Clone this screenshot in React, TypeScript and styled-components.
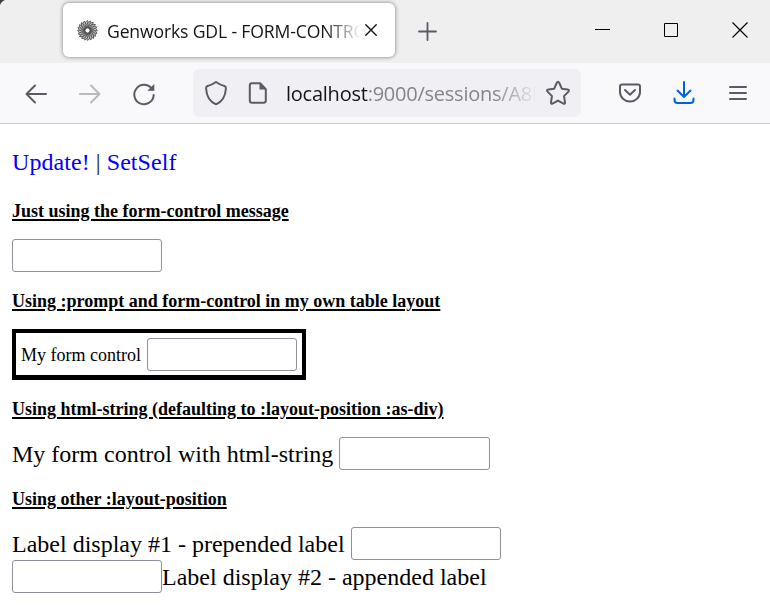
import React from "react";
import styled, { createGlobalStyle } from "styled-components";

const GlobalStyle = createGlobalStyle`
  * { box-sizing: border-box; }
  body { margin: 0; background: #fff; overflow: hidden; }
  svg { display: block; flex: none; }
`;

const Window = styled.div`
  width: 770px;
  height: 611px;
  overflow: hidden;
  background: #fff;
`;

const TabStrip = styled.header`
  display: flex;
  height: 63px;
  padding: 3px 0 0 63px;
  background: radial-gradient(circle at 8px 8px, #efefef 8px, #3b4244 9px) 0 0 / 8px 8px no-repeat, #efefef;
`;

const Tab = styled.div`
  display: flex;
  align-items: center;
  width: 332px;
  height: 54px;
  padding: 0 13px 0 14px;
  border-radius: 6px;
  background: #fff;
  box-shadow: 0 0 4px rgba(0, 0, 0, 0.48);
`;

const TabTitle = styled.div`
  width: 253px;
  padding-top: 1px;
  margin-left: 9px;
  overflow: hidden;
  white-space: nowrap;
  font: 17.6px/28px "Open Sans", "Noto Sans", sans-serif;
  letter-spacing: -0.15px;
  color: #15141a;
  mask-image: linear-gradient(to right, #000 218px, transparent 254px);
`;

const IconButton = styled.button<{ $w: number; $h?: number; $color?: string }>`
  display: flex;
  flex: none;
  align-items: center;
  justify-content: center;
  width: ${(p) => p.$w}px;
  height: ${(p) => p.$h ?? 48}px;
  padding: 0;
  border: 0;
  background: none;
  color: ${(p) => p.$color ?? "#5b5b66"};
`;

const NewTab = styled.div`
  padding: 4px 0 0 8px;
`;

const WindowControls = styled.div`
  display: flex;
  margin-left: auto;
  padding-top: 3px;
  margin-right: -5px;
`;

const Toolbar = styled.nav`
  display: flex;
  align-items: center;
  height: 61px;
  padding-left: 9px;
  border-bottom: 1px solid #ccc;
  background: #f9f9fb;
`;

const Navigation = styled.div`
  display: flex;
  padding-top: 2px;
`;

const AddressBar = styled.div`
  display: flex;
  align-items: center;
  width: 388px;
  height: 48px;
  margin-left: 22px;
  padding-left: 2px;
  border-radius: 6px;
  background: #f0f0f4;
`;

const Address = styled.div`
  width: 249px;
  padding-top: 2px;
  margin-left: 7px;
  overflow: hidden;
  white-space: nowrap;
  font: 20px/32px "Open Sans", "Noto Sans", sans-serif;
  letter-spacing: -0.24px;
  color: #85858a;
  mask-image: linear-gradient(to right, #000 208px, transparent 252px);
`;

const Host = styled.span`
  color: #15141a;
`;

const Actions = styled.div`
  display: flex;
  margin-left: 22px;
`;

const Page = styled.main`
  padding: 22px 12px 0;
  font: 24px/33px "Liberation Serif", "Times New Roman", serif;
  color: #000;
`;

const Links = styled.div`
  height: 36px;
  letter-spacing: 0.06px;
`;

const Link = styled.a`
  color: #00f;
`;

const Divider = styled.span`
  color: #222;
`;

const Heading = styled.h3`
  height: 20px;
  margin: 19px 0 18px;
  font-size: 18px;
  font-weight: bold;
  line-height: 20px;
  text-decoration: underline;
  text-decoration-thickness: 2px;
  text-underline-offset: 2px;
`;

const Row = styled.div<{ $gap?: number }>`
  display: flex;
  height: 33px;
  gap: ${(p) => p.$gap ?? 0}px;
  white-space: nowrap;
`;

const Field = styled.input<{ $w?: number }>`
  flex: none;
  width: ${(p) => p.$w ?? 150}px;
  height: 33px;
  padding: 2px;
  border: 1px solid #8f8f9d;
  border-radius: 3px;
  background: #fff;
`;

const Label = styled.label`
  padding-top: 1px;
`;

const Framed = styled.div`
  display: flex;
  justify-content: space-between;
  width: 294px;
  height: 51px;
  padding: 5px 5px 0;
  border: 4px solid #000;
  border-bottom-width: 5px;
  font-size: 18px;
`;

function Rosette() {
  return (
    <svg width="21" height="21" viewBox="-10.5 -10.5 21 21" fill="none" stroke="#444" strokeWidth="0.75">
      <circle r="6.5" stroke="#999" strokeWidth="7" opacity="0.45" />
      {Array.from({ length: 20 }, (_, i) => (
        <path key={i} d="M2 0Q6-5 10 0" transform={`rotate(${i * 18})`} />
      ))}
      {Array.from({ length: 20 }, (_, i) => (
        <path key={i} d="M2 0Q5 3 9.500 3" transform={`rotate(${i * 18})`} strokeWidth="0.5" />
      ))}
      <circle r="3.2" strokeWidth="1.6" stroke="#555" />
      <circle r="2" fill="#fff" stroke="none" />
    </svg>
  );
}

const line = { fill: "none", stroke: "currentColor", strokeWidth: 2, strokeLinecap: "round", strokeLinejoin: "round" } as const;

export default function App() {
  return (
    <Window>
      <GlobalStyle />
      <TabStrip>
        <Tab>
          <Rosette />
          <TabTitle>Genworks GDL - FORM-CONTRO</TabTitle>
          <IconButton $w={22} $color="#15141a" aria-label="Close tab">
            <svg width="12" height="12" viewBox="0 0 12 12" {...line} strokeWidth={1.4}><path d="M.8.8l10.4 10.4M11.2.8.8 11.2" /></svg>
          </IconButton>
        </Tab>
        <NewTab>
          <IconButton $w={49} aria-label="New tab">
            <svg width="19" height="19" viewBox="0 0 19 19" {...line} strokeWidth={1.8}><path d="M9.500 1v17M1 9.500h17" /></svg>
          </IconButton>
        </NewTab>
        <WindowControls>
          <IconButton $w={69} $color="#000" aria-label="Minimize">
            <svg width="15" height="15" viewBox="0 0 15 15"><path d="M0 6h15v1H0z" fill="currentColor" /></svg>
          </IconButton>
          <IconButton $w={69} $color="#000" aria-label="Maximize">
            <svg width="15" height="15" viewBox="0 0 15 15"><path d="M.5.5h13v13H.5z" fill="none" stroke="currentColor" /></svg>
          </IconButton>
          <IconButton $w={69} $color="#000" aria-label="Close">
            <svg width="18" height="16" viewBox="0 0 18 16"><path d="m.5.5 15 15M15.5.5l-15 15" stroke="currentColor" strokeWidth="1.2" /></svg>
          </IconButton>
        </WindowControls>
      </TabStrip>
      <Toolbar>
        <Navigation>
          <IconButton $w={54} aria-label="Back">
            <svg width="22" height="20" viewBox="0 0 22 20" {...line}><path d="M21 10H1.5M10 1.5 1.5 10l8.500 8.500" /></svg>
          </IconButton>
          <IconButton $w={54} $color="#b8b8bf" aria-label="Forward">
            <svg width="22" height="20" viewBox="0 0 22 20" {...line}><path d="M1 10h19.500M12 1.500l8.500 8.500-8.500 8.500" /></svg>
          </IconButton>
          <IconButton $w={54} aria-label="Reload">
            <svg width="24" height="24" viewBox="0 0 24 24" {...line}>
              <path d="M20.300 7.500A9.700 9.700 0 1 0 21.700 13" />
              <path d="M22.300 2v6.700h-7z" fill="currentColor" stroke="none" />
            </svg>
          </IconButton>
        </Navigation>
        <AddressBar>
          <IconButton $w={42} aria-label="Tracking protection">
            <svg width="24" height="26" viewBox="0 0 24 26" {...line}><path d="M12 2Q16.500 5.200 20.500 6C22 6.500 22 7 21.900 8.500 21.500 16.500 18 21.800 12 24.300 6 21.800 2.500 16.500 2.100 8.500 2 7 2 6.500 3.500 6Q7.500 5.200 12 2Z" /></svg>
          </IconButton>
          <IconButton $w={42} aria-label="Site information">
            <svg width="20" height="24" viewBox="0 0 20 24" {...line}>
              <path d="M4 2.300h8.200l5.600 6v11.200q0 2.200-2.200 2.200H4q-2.200 0-2.200-2.200v-15Q1.800 2.300 4 2.300Z" />
              <path d="M11.500 2v6.500H18z" fill="currentColor" stroke="none" />
            </svg>
          </IconButton>
          <Address><Host>localhost</Host>:9000/sessions/A8B</Address>
          <IconButton $w={46} aria-label="Bookmark">
            <svg width="26" height="26" viewBox="0 0 26 26" {...line}><path d="M11.700 3q1.300-2.300 2.600 0l2.500 5.700 5.700.8q2.600.5.700 2.400l-4.200 4.200 1 6q.3 2.500-1.900 1.300L13 20.600l-5.100 2.800q-2.200 1.200-1.900-1.300l1-6L2.800 11.900q-1.900-1.900.7-2.400l5.700-.8Z" /></svg>
          </IconButton>
        </AddressBar>
        <Actions>
          <IconButton $w={54} aria-label="Save to Pocket">
            <svg width="22" height="20" viewBox="0 0 22 20" {...line}>
              <path d="M3 1.500h16q2 0 2 2V9a10 9.500 0 0 1-20 0V3.500q0-2 2-2Z" /><path d="m6 7 5 4.700L16 7" />
            </svg>
          </IconButton>
          <IconButton $w={53} $color="#0061e0" aria-label="Downloads">
            <svg width="22" height="26" viewBox="0 0 22 26" {...line}><path d="M11 2v15M4.500 10.500 11 17l6.500-6.500M1.500 18.500v1.500q0 3 3 3h13q3 0 3-3v-1.500" /></svg>
          </IconButton>
          <IconButton $w={55} aria-label="Menu">
            <svg width="20" height="19" viewBox="0 0 20 19" {...line}><path d="M2 3h16M2 9h16M2 15h16" /></svg>
          </IconButton>
        </Actions>
      </Toolbar>
      <Page>
        <Links><Link>Update!</Link> <Divider>|</Divider> <Link>SetSelf</Link></Links>
        <Heading>Just using the form-control message</Heading>
        <Row><Field /></Row>
        <Heading>Using :prompt and form-control in my own table layout</Heading>
        <Framed><Label>My form control</Label><Field /></Framed>
        <Heading>Using html-string (defaulting to :layout-position :as-div)</Heading>
        <Row $gap={6}><Label>My form control with html-string</Label><Field $w={151} /></Row>
        <Heading>Using other :layout-position</Heading>
        <Row $gap={6}><Label>Label display #1 - prepended label</Label><Field /></Row>
        <Row><Field /><Label>Label display #2 - appended label</Label></Row>
      </Page>
    </Window>
  );
}
